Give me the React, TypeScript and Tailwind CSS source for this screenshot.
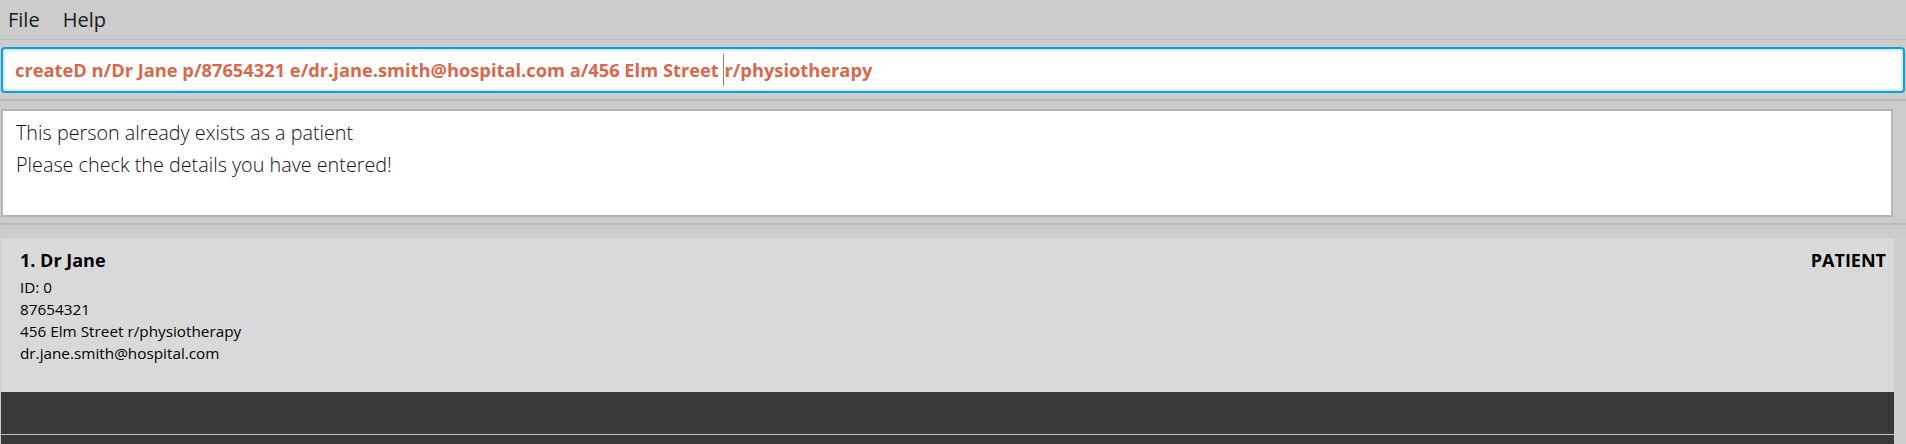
import React from "react";

const font = { fontFamily: '"Open Sans", "Noto Sans", sans-serif' };

function MenuBar() {
  return (
    <div className="flex h-[40px] items-center gap-[23px] border-b border-[#b9b9b9] bg-[#cccccc] px-[8px] text-[20px] text-[#1a1a1a]">
      <span>File</span>
      <span>Help</span>
    </div>
  );
}

function CommandBox() {
  return (
    <div className="border-b-2 border-[#b9b9b9] px-[1px] pt-[7px] pb-[6px]">
      <div className="flex h-[46px] items-center rounded-[4px] border-2 border-[#0b9fd8] bg-white px-[12px] shadow-[inset_0_0_0_2px_#d6eefa]">
        <span className="whitespace-pre text-[18.3px] font-bold text-[#d8684c]">
          createD n/Dr Jane p/87654321 e/dr.jane.smith@hospital.com a/456 Elm Street{" "}
        </span>
        <span className="h-[32px] w-[1px] bg-[#d8684c]" />
        <span className="whitespace-pre text-[18.3px] font-bold text-[#d8684c]">r/physiotherapy</span>
      </div>
    </div>
  );
}

function ResultBox() {
  return (
    <div className="border-b-2 border-[#b9b9b9] pt-[8px] pb-[6px] pl-[1px] pr-[13px]">
      <div className="h-[108px] border-2 border-[#b5b5b5] bg-white px-[13px] pt-[6px] text-[19.8px] font-light leading-[32px] text-[#111111]">
        <div>This person already exists as a patient</div>
        <div>Please check the details you have entered!</div>
      </div>
    </div>
  );
}

function PersonCard() {
  return (
    <div className="flex h-[154px] justify-between bg-[#d9d9d9] pl-[19px] pr-[8px] pt-[9px]">
      <div className="flex flex-col">
        <div className="text-[18px] font-bold leading-[26px] text-black">1. Dr Jane</div>
        <div className="mt-[3px] text-[15.3px] leading-[22px] text-black">
          <div>ID: 0</div>
          <div>87654321</div>
          <div>456 Elm Street r/physiotherapy</div>
          <div>dr.jane.smith@hospital.com</div>
        </div>
      </div>
      <div className="text-[18px] font-bold leading-[26px] text-black">PATIENT</div>
    </div>
  );
}

export default function App() {
  return (
    <div className="flex h-[444px] w-[1906px] flex-col overflow-hidden bg-[#cccccc]" style={font}>
      <MenuBar />
      <CommandBox />
      <ResultBox />
      <div className="flex flex-1 pt-[13px] pl-[1px]">
        <div className="flex flex-1 flex-col">
          <PersonCard />
          <div className="h-[42px] bg-[#383838]" />
          <div className="h-[1px] bg-[#bdbdbd]" />
          <div className="flex-1 bg-[#383838]" />
        </div>
        <div className="w-[12px] bg-[#cfcfcf]" />
      </div>
    </div>
  );
}
